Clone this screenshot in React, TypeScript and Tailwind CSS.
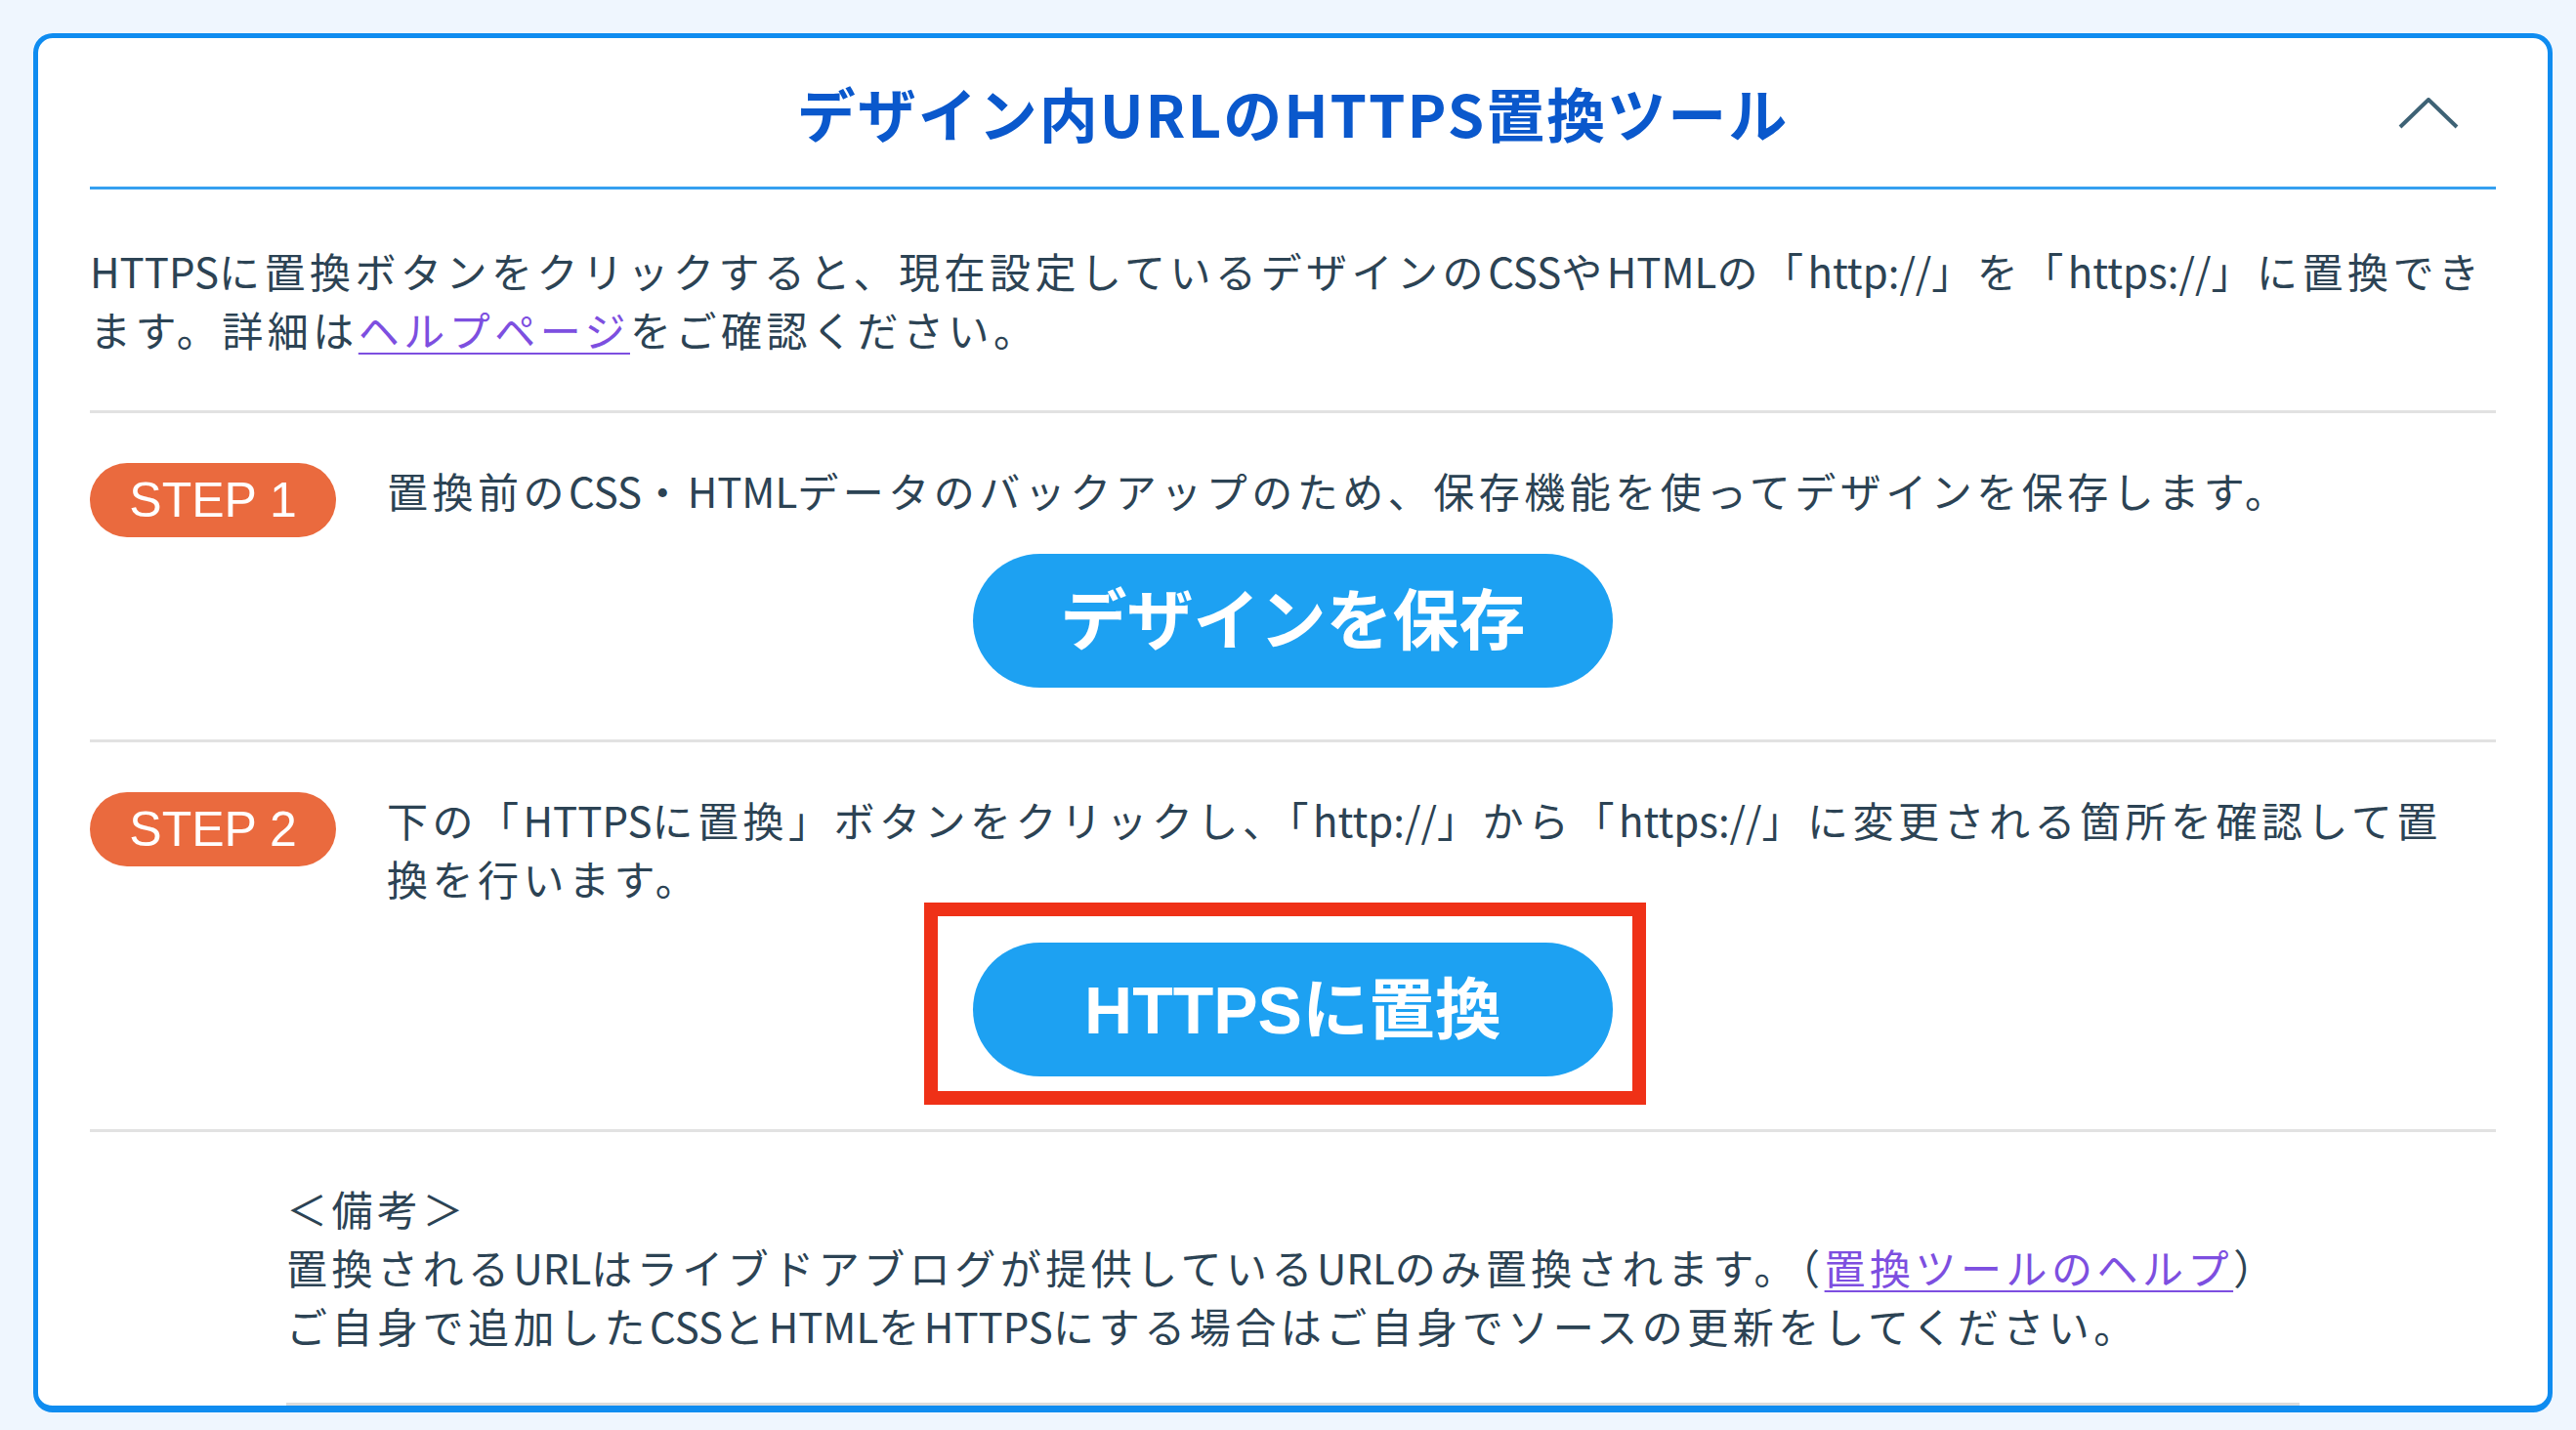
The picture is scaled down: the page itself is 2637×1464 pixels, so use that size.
import React from "react";

const body = "font-['Noto_Sans_CJK_JP',sans-serif]";
const btnFont = "font-['Liberation_Sans','Noto_Sans_CJK_JP',sans-serif]";
const textCls = "text-[42px] leading-[60px] tracking-[4.5px] text-[#2c4354]";

// latin runs sit tighter than the kana around them
function L({ children }: { children: React.ReactNode }) {
  return <span className="tracking-normal">{children}</span>;
}

function StepBadge({ label }: { label: string }) {
  return (
    <div className="float-left mt-[2px] mr-[52px] flex h-[76px] w-[252px] items-center justify-center rounded-full bg-[#ea6a3e] text-[50px] tracking-normal text-white font-['Liberation_Sans',sans-serif]">
      {label}
    </div>
  );
}

function BlueButton({ children }: { children: React.ReactNode }) {
  return (
    <button
      type="button"
      className={`block h-[137px] w-[655px] rounded-full bg-[#1da1f2] text-[68px] font-bold text-white ${btnFont}`}
    >
      {children}
    </button>
  );
}

const linkCls = "text-[#7d4fe0] underline decoration-2 underline-offset-[6px]";

export default function App() {
  return (
    <div className={`min-h-screen bg-[#eff6fe] pt-[34px] pl-[34px] pb-[17px] ${body}`}>
      <div className="w-[2579px] rounded-[20px] border-[5px] border-b-[7px] border-[#0f8cf0] bg-white px-[53px]">
        {/* header */}
        <header className="relative flex h-[155px] items-center justify-center border-b-[3px] border-[#35a0f0]">
          <h1 className="text-[60px] font-bold tracking-[2px] text-[#0a58cc]">
            デザイン内URLのHTTPS置換ツール
          </h1>
          <svg
            className="absolute right-[38px] top-[61px]"
            width="62"
            height="32"
            viewBox="0 0 62 32"
            fill="none"
          >
            <polyline
              points="2,30 31,2 60,30"
              stroke="#3e6275"
              strokeWidth="4"
              strokeLinejoin="round"
            />
          </svg>
        </header>

        {/* intro */}
        <p className={`whitespace-nowrap border-b-[3px] border-[#e2e2e2] py-[53px] ${textCls}`}>
          <L>HTTPS</L>に置換ボタンをクリックすると、現在設定しているデザインの<L>CSS</L>や<L>HTML</L>の「<L>http://</L>」を「<L>https://</L>」に置換でき
          <br />
          ます。詳細は
          <a href="#" className={linkCls}>
            ヘルプページ
          </a>
          をご確認ください。
        </p>

        {/* step 1 */}
        <section className="flow-root border-b-[3px] border-[#e2e2e2] pt-[49px] pb-[53px]">
          <StepBadge label="STEP 1" />
          <p className={`overflow-hidden whitespace-nowrap ${textCls}`}>
            置換前の<L>CSS</L>・<L>HTML</L>データのバックアップのため、保存機能を使ってデザインを保存します。
          </p>
          <div className="mx-auto mt-[35px] w-[655px]">
            <BlueButton>デザインを保存</BlueButton>
          </div>
        </section>

        {/* step 2 */}
        <section className="flow-root border-b-[3px] border-[#e2e2e2] pt-[49px] pb-[54px]">
          <StepBadge label="STEP 2" />
          <p className={`overflow-hidden whitespace-nowrap ${textCls}`}>
            下の「<L>HTTPS</L>に置換」ボタンをクリックし、「<L>http://</L>」から「<L>https://</L>」に変更される箇所を確認して置
            <br />
            換を行います。
          </p>
          <div className="relative mx-auto mt-[36px] w-[655px]">
            <BlueButton>HTTPSに置換</BlueButton>
            <div className="pointer-events-none absolute -top-[41px] -right-[34px] -bottom-[29px] -left-[50px] border-[14px] border-[#ef3117]" />
          </div>
        </section>

        {/* notes */}
        <div className={`mx-[201px] whitespace-nowrap border-b-[3px] border-[#dcdcdc] pt-[48px] pb-[49px] ${textCls}`}>
          <p>＜備考＞</p>
          <p>
            置換される<L>URL</L>はライブドアブログが提供している<L>URL</L>のみ置換されます。（
            <a href="#" className={linkCls}>
              置換ツールのヘルプ
            </a>
            ）
          </p>
          <p>
            ご自身で追加した<L>CSS</L>と<L>HTML</L>を<L>HTTPS</L>にする場合はご自身でソースの更新をしてください。
          </p>
        </div>
      </div>
    </div>
  );
}
